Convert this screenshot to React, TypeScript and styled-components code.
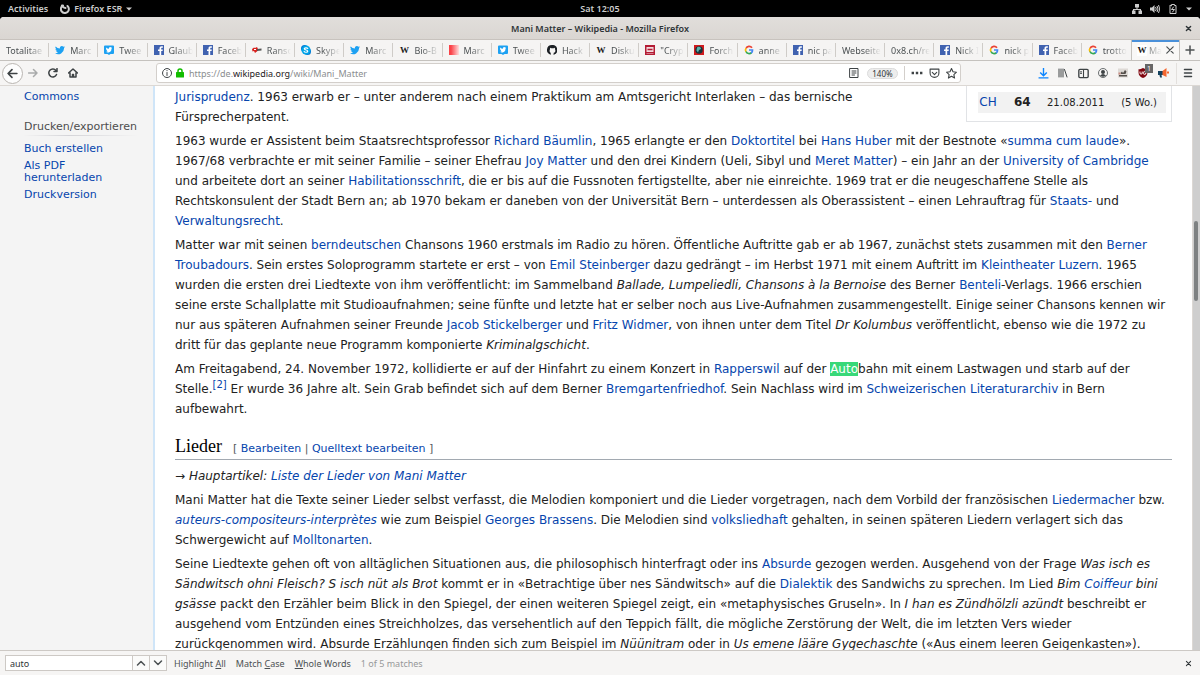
import React from "react";
import styled, { createGlobalStyle, css } from "styled-components";

const Global = createGlobalStyle`
  * { box-sizing: border-box; }
  html, body { margin: 0; height: 100%; }
  #root { height: 100%; }
  body { font-family: "DejaVu Sans", sans-serif; font-size: 12px; }
  button, input { font: inherit; color: inherit; }
  button { border: 0; padding: 0; background: none; }
  a { color: #0645ad; text-decoration: none; }
  a:hover { text-decoration: underline; }
`;

const uiFont = `"Noto Sans", "Open Sans", sans-serif`;

const Screen = styled.div`
  display: flex;
  flex-direction: column;
  height: 100vh;
  overflow: hidden;
  background: #000;
`;

const ShellBar = styled.header`
  display: grid;
  grid-template-columns: 1fr auto 1fr;
  align-items: center;
  flex: none;
  height: 17px;
  padding: 0 8px;
  background: #000;
  color: #ccc;
  font: 600 9px ${uiFont};
`;

const ShellGroup = styled.div<{ $end?: boolean }>`
  display: flex;
  align-items: center;
  justify-content: ${(p) => (p.$end ? "flex-end" : "flex-start")};
  gap: ${(p) => (p.$end ? "8px" : "12px")};
`;

const ShellButton = styled.button`
  display: flex;
  align-items: center;
  gap: 4px;
`;

const Browser = styled.div`
  display: flex;
  flex-direction: column;
  flex: 1;
  min-height: 0;
  border-radius: 4px 4px 0 0;
  overflow: hidden;
  background: #f6f5f4;
`;

const TitleBar = styled.div`
  display: grid;
  grid-template-columns: 1fr auto 1fr;
  align-items: center;
  flex: none;
  height: 23px;
  padding: 0 8px;
  background: linear-gradient(#e1dedb, #dad6d2);
  border-bottom: 1px solid #c8c3be;
  color: #2e3436;
  font: 600 9px ${uiFont};
`;

const TitleText = styled.span`
  grid-column: 2;
`;

const CloseButton = styled.button`
  display: flex;
  justify-self: end;
  color: #2e3436;
`;

const TabStrip = styled.div`
  display: flex;
  flex: none;
  height: 21px;
  border-bottom: 1px solid #c5c2be;
  background: #f5f4f3;
  font: 9px ${uiFont};
`;

const Tab = styled.button<{ $active?: boolean }>`
  display: flex;
  flex: 1 1 0;
  align-items: center;
  gap: 5px;
  min-width: 0;
  padding: 0 2px 0 6px;
  position: relative;
  color: #4c5153;
  svg { flex: none; }
  ${(p) =>
    p.$active
      ? css`
          flex: 0 0 49px;
          gap: 2px;
          padding: 0 5px;
          border: solid #c5c2be;
          border-width: 0 1px;
          background: #f9f8f7;
          box-shadow: inset 0 2px #4a90d9;
        `
      : css`
          &:not(:nth-last-child(3))::after {
            content: "";
            position: absolute;
            right: 0;
            top: 3px;
            bottom: 3px;
            width: 1px;
            background: #cfccc8;
          }
        `}
`;

const TabLabel = styled.span`
  flex: 1;
  min-width: 0;
  overflow: hidden;
  white-space: nowrap;
  text-align: left;
  mask-image: linear-gradient(to left, transparent 2px, #000 20px);
`;

const WikiMark = styled.span<{ $plate?: boolean }>`
  flex: none;
  width: 10px;
  background: ${(p) => (p.$plate ? "#fff" : "none")};
  color: #1b1b1b;
  text-align: center;
  font: 700 9px/11px "Liberation Serif", serif;
`;

const NewTab = styled.button`
  display: flex;
  align-items: center;
  justify-content: center;
  flex: none;
  width: 20px;
  color: #4c5153;
`;

const NavBar = styled.nav`
  display: flex;
  align-items: center;
  flex: none;
  height: 25px;
  border-bottom: 1px solid #dcd8d4;
  background: #f6f5f4;
  color: #3e4345;
`;

const NavButtons = styled.div`
  display: flex;
  align-items: center;
  width: 156px;
  padding-left: 2px;
`;

const IconButton = styled.button`
  display: flex;
  align-items: center;
  justify-content: center;
  width: 20px;
  height: 21px;
  &:disabled { color: #a9abab; }
`;

const BackButton = styled(IconButton)`
  width: 21px;
  border: 1px solid #b9b5b1;
  border-radius: 50%;
  background: #fdfdfd;
`;

const UrlBar = styled.div`
  display: flex;
  align-items: center;
  gap: 4px;
  flex: 1;
  height: 20px;
  margin-right: 72px;
  padding: 0 3px 0 5px;
  border: 1px solid #d3cfcb;
  border-radius: 3px;
  background: #fff;
`;

const Address = styled.div`
  flex: 1;
  margin-left: 1px;
  color: #8b8e8f;
  font: 9px ${uiFont};
  b { font-weight: 400; color: #1d2022; }
`;

const ZoomLevel = styled.button`
  width: 31px;
  height: 11px;
  margin: 0 2px 0 4px;
  border: 1px solid #dcdcdc;
  border-radius: 6px;
  background: #ededed;
  color: #2e3436;
  font: 8px/9px ${uiFont};
`;

const Divider = styled.span`
  width: 1px;
  height: 14px;
  margin-right: 2px;
  background: #d3cfcb;
`;

const UrlActions = styled.div`
  display: flex;
  align-items: center;
  gap: 6px;
`;

const Extensions = styled.div`
  display: flex;
  align-items: center;
`;

const Shield = styled.span`
  position: relative;
  display: flex;
`;

const Badge = styled.span`
  position: absolute;
  left: 7px;
  top: -4px;
  width: 8px;
  height: 9px;
  background: #666;
  color: #fff;
  text-align: center;
  font: 7px/9px ${uiFont};
`;

const MenuSlot = styled.div`
  display: flex;
  margin-left: 3px;
  padding: 0 2px 0 1px;
  border-left: 1px solid #e3e0dd;
`;

const Viewport = styled.div`
  display: flex;
  flex: 1;
  min-height: 0;
  overflow: hidden;
  background: #f4f4f4;
`;

const Sidebar = styled.aside`
  flex: none;
  width: 153px;
  padding: 5px 16px 0 24px;
  font-size: 11px;
  line-height: 12px;
`;

const SideHeading = styled.h3`
  margin: 17px 0 7px;
  padding-bottom: 2px;
  border-bottom: 1px solid;
  border-image: linear-gradient(to right, #f4f4f4, #d4d4d8 40%, #f4f4f4) 1;
  color: #4d4d4d;
  font-size: 11px;
  font-weight: 400;
  line-height: 13px;
`;

const SideList = styled.ul`
  display: flex;
  flex-direction: column;
  gap: 5px;
  margin: 0;
  padding: 0;
  list-style: none;
`;

const Article = styled.main`
  flex: 1;
  min-width: 0;
  padding: 1px 20px 0;
  border-left: 2px solid #cfe5f8;
  background: #fff;
  color: #222;
  line-height: 20px;
`;

const ChartBox = styled.div`
  float: right;
  width: 206px;
  margin: -1px 0 0 12px;
  padding: 6px 5px 8px 11px;
  border: 1px solid #e1e3e6;
  border-top: 0;
`;

const ChartTable = styled.table`
  width: 100%;
  border-spacing: 0;
  background: #f2f2f2;
  font-size: 10px;
  line-height: 21px;
  th, td { padding: 0; text-align: left; font-weight: 400; }
  th { width: 20px; font-size: 12px; text-align: center; }
  td:last-child { padding-right: 9px; text-align: right; }
`;

const ChartWeeks = styled.td`
  width: 49px;
  font-size: 12px;
  b { margin-left: 16px; font-weight: 700; }
`;

const Paragraph = styled.p`
  margin: 0 0 4px;
`;

const Hit = styled.mark`
  background: #38d878;
  color: #fff;
`;

const Cited = styled.span`
  white-space: nowrap;
`;

const Sup = styled.sup`
  font-size: 10px;
  line-height: 1;
`;

const SectionHeading = styled.h2`
  display: flex;
  align-items: baseline;
  gap: 11px;
  margin: 15px 0 6px;
  border-bottom: 1px solid #a2a9b1;
  color: #000;
  font: 400 18px/24px "Liberation Serif", serif;
`;

const EditLinks = styled.span`
  color: #54595d;
  font: 11px/20px "DejaVu Sans", sans-serif;
`;

const ScrollTrack = styled.div`
  flex: none;
  width: 8px;
  padding-top: 135px;
  border-left: 1px solid #dcd8d4;
  background: #cecece;
`;

const ScrollThumb = styled.div`
  width: 4px;
  height: 80px;
  margin-left: 1px;
  border-radius: 2px;
  background: #7e8182;
`;

const FindBar = styled.form`
  display: flex;
  align-items: center;
  flex: none;
  height: 25px;
  padding: 0 8px 0 5px;
  border-top: 1px solid #cdc9c5;
  background: #f6f5f4;
  color: #4c5153;
  font: 9px ${uiFont};
`;

const FindInput = styled.input`
  width: 128px;
  height: 16px;
  padding: 0 4px;
  border: 1px solid #cdc9c5;
  background: #fff;
  color: #2e3436;
`;

const FindStep = styled.button`
  display: flex;
  align-items: center;
  justify-content: center;
  width: 17px;
  height: 16px;
  border: 1px solid #cdc9c5;
  border-left: 0;
  background: #fbfbfa;
`;

const FindOptions = styled.div`
  display: flex;
  flex: 1;
  gap: 10px;
  margin-left: 7px;
`;

const Matches = styled.span`
  color: #969899;
`;

type IconName =
  | "none" | "twitter" | "tweet" | "facebook" | "knife" | "skype" | "wiki"
  | "red" | "github" | "cryp" | "forch" | "google";

const bird =
  "M20 4a8 8 0 0 1-2.400.600A4 4 0 0 0 19.400 2.300a8 8 0 0 1-2.600 1A4.100 4.100 0 0 0 9.800 7 11.600 11.600 0 0 1 1.400 2.800a4.100 4.100 0 0 0 1.300 5.500A4 4 0 0 1 .8 7.800a4.100 4.100 0 0 0 3.300 4 4 4 0 0 1-1.800.1 4.100 4.100 0 0 0 3.800 2.800A8.200 8.200 0 0 1 0 16.400a11.600 11.600 0 0 0 18-10.300A8 8 0 0 0 20 4z";

const iconArt: Partial<Record<IconName, React.ReactNode>> = {
  twitter: <path fill="#1da1f2" d={bird} />,
  tweet: (
    <>
      <path fill="#1da1f2" d="M2 1h16a2 2 0 0 1 2 2v13a2 2 0 0 1-2 2h-5l-3 2-3-2H2a2 2 0 0 1-2-2V3a2 2 0 0 1 2-2z" />
      <path fill="#fff" transform="translate(3.500 3) scale(.65)" d={bird} />
    </>
  ),
  facebook: (
    <>
      <path fill="#4062b0" d="M0 0h20v20H0z" />
      <path fill="#fff" d="M11 20v-8H8V9h3V7c0-3 1.500-4.500 4.300-4.500h2.400v3h-1.600c-1.400 0-1.700.6-1.700 1.700V9h3.200l-.4 3h-2.800v8z" />
    </>
  ),
  knife: (
    <>
      <path fill="#d8221f" d="M0 8l4-3 2 1 4-2 2 4-1 4-5 4-2-4-3 1z" />
      <path fill="#555" d="M10 8l9-1v4l-9 1z" />
      <path fill="#fff" d="M4 8h4v2H4z" />
    </>
  ),
  skype: (
    <>
      <circle cx="7" cy="7" r="7" fill="#0078d4" />
      <circle cx="13" cy="13" r="7" fill="#0078d4" />
      <circle cx="10" cy="10" r="9" fill="#00a4e8" />
      <path fill="none" stroke="#fff" strokeWidth="2.400" strokeLinecap="round" d="M13.500 7c-1-2-7-2-7 .7 0 3 7 1.500 7 4.600 0 3-6.500 2.700-7.200.3" />
    </>
  ),
  red: (
    <>
      <defs>
        <linearGradient id="redFade">
          <stop offset=".2" stopColor="#fa4248" />
          <stop offset="1" stopColor="#fdd" />
        </linearGradient>
      </defs>
      <path fill="url(#redFade)" d="M0 0h20v20H0z" />
    </>
  ),
  github: (
    <path
      fill="#1b1f23"
      d="M10 0a10 10 0 0 0-3.200 19.500c.5.1.7-.2.7-.5v-3.400c-1.700-.5-2.300-2-2.300-4.500 0-1.200.4-2 1-2.800-.2-.7-.2-1.600.1-2.700 1 0 1.900.5 2.700 1.100h4c.8-.6 1.700-1.100 2.700-1.100.3 1 .3 2 .1 2.700.6.800 1 1.600 1 2.800 0 2.500-.6 4-3.300 4.500l-.5 3.400c0 .3.200.6.700.5A10 10 0 0 0 10 0z"
    />
  ),
  cryp: (
    <>
      <path fill="#b31b34" d="M0 0h20v20H0z" />
      <path fill="#f3dadd" d="M3 4h14v10H3zM3 16h14v1H3z" />
      <path stroke="#b31b34" strokeWidth="3" d="M5 9h10" />
    </>
  ),
  forch: (
    <>
      <path fill="#d01a1d" d="M0 0h20v20H0z" />
      <circle cx="10" cy="10" r="7.500" fill="#17343a" />
      <path fill="#58b5ae" d="M6 5c3-3 8-1 8 3l-4 2-2 5-3-4z" />
    </>
  ),
  google: (
    <g fill="none" strokeWidth="3.400">
      <path stroke="#ea4335" d="M16 5.500A7 7 0 0 0 4 7" />
      <path stroke="#fbbc05" d="M4 6.500a7 7 0 0 0 0 7" />
      <path stroke="#34a853" d="M4 13a7 7 0 0 0 11 2.500" />
      <path stroke="#4285f4" d="M10 10h7a7 7 0 0 1-2.500 6" />
    </g>
  ),
};

const Favicon = ({ name }: { name: IconName }) => {
  if (name === "none") return null;
  if (name === "wiki") return <WikiMark>W</WikiMark>;
  return (
    <svg width="10" height="10" viewBox="0 0 20 20" aria-hidden="true">
      {iconArt[name]}
    </svg>
  );
};

const tabs: { icon: IconName; label: string }[] = [
  { icon: "none", label: "Totalitae" },
  { icon: "twitter", label: "Marc" },
  { icon: "tweet", label: "Twee" },
  { icon: "facebook", label: "Glaub" },
  { icon: "facebook", label: "Faceb" },
  { icon: "knife", label: "Ranso" },
  { icon: "skype", label: "Skype" },
  { icon: "twitter", label: "Marc" },
  { icon: "wiki", label: "Bio-B" },
  { icon: "red", label: "Marc" },
  { icon: "tweet", label: "Twee" },
  { icon: "github", label: "Hack" },
  { icon: "wiki", label: "Disku" },
  { icon: "cryp", label: "\"Cryp" },
  { icon: "forch", label: "Forch" },
  { icon: "google", label: "anne" },
  { icon: "facebook", label: "nic pa" },
  { icon: "none", label: "Webseite" },
  { icon: "none", label: "0x8.ch/re" },
  { icon: "facebook", label: "Nick I" },
  { icon: "google", label: "nick p" },
  { icon: "facebook", label: "Faceb" },
  { icon: "google", label: "trotto" },
];

type GlyphProps = { d: string; size?: number; fill?: boolean; width?: number };

const Glyph = ({ d, size = 10, fill, width = 2 }: GlyphProps) => (
  <svg
    width={size}
    height={size}
    viewBox="0 0 20 20"
    fill={fill ? "currentColor" : "none"}
    stroke={fill ? "none" : "currentColor"}
    strokeWidth={width}
    strokeLinecap="round"
    strokeLinejoin="round"
    aria-hidden="true"
  >
    <path d={d} />
  </svg>
);

const cross = "M4 4l12 12M16 4L4 16";
const caret = "M0 5h20L10 15z";
const L = ({ children }: { children: React.ReactNode }) => <a href="#">{children}</a>;

export default function App() {
  return (
    <Screen>
      <Global />
      <ShellBar>
        <ShellGroup>
          <ShellButton>Activities</ShellButton>
          <ShellButton>
            <Glyph width={4} d="M6 3a8 8 0 1 0 9 1M4 3c2 2 3 5 7 5" />
            Firefox ESR
            <Glyph size={6} fill d={caret} />
          </ShellButton>
        </ShellGroup>
        <span>Sat 12:05</span>
        <ShellGroup $end>
          <Glyph fill d="M6 0h8v7h-3v3h7v3h2v7h-7v-7h3v-1H4v1h3v7H0v-7h2v-3h7V7H6z" />
          <svg width="10" height="10" viewBox="0 0 20 20" fill="none" stroke="currentColor" strokeWidth="2" aria-hidden="true">
            <path fill="currentColor" stroke="none" d="M0 7h4l5-5v16l-5-5H0z" />
            <path d="M11 6q3 4 0 8M14 4q4 6 0 12M17 2q5 8 0 16" />
          </svg>
          <Glyph width={2} d="M7 3V1h6v2h3v16H4V3zM11 6l-4 5h6l-4 5" />
          <Glyph size={6} fill d={caret} />
        </ShellGroup>
      </ShellBar>
      <Browser>
        <TitleBar>
          <TitleText>Mani Matter – Wikipedia - Mozilla Firefox</TitleText>
          <CloseButton aria-label="Close window"><Glyph size={7} width={4} d={cross} /></CloseButton>
        </TitleBar>
        <TabStrip>
          {tabs.map((t, i) => (
            <Tab key={i}>
              <Favicon name={t.icon} />
              <TabLabel>{t.label}</TabLabel>
            </Tab>
          ))}
          <Tab $active>
            <WikiMark $plate>W</WikiMark>
            <TabLabel>Ma</TabLabel>
            <Glyph size={8} width={3} d="M2 2l16 16M18 2L2 18" />
          </Tab>
          <NewTab aria-label="New tab"><Glyph width={3} d="M10 2v16M2 10h16" /></NewTab>
        </TabStrip>
        <NavBar>
          <NavButtons>
            <BackButton aria-label="Back"><Glyph size={11} width={3} d="M18 10H2M9 3l-7 7 7 7" /></BackButton>
            <IconButton aria-label="Forward" disabled><Glyph width={3} d="M1 10h17M11 3l7 7-7 7" /></IconButton>
            <IconButton aria-label="Reload"><Glyph width={3} d="M17 13a8 8 0 1 1-1-8M18 1v6h-6" /></IconButton>
            <IconButton aria-label="Home"><Glyph width={3} d="M1 10l9-8 9 8M4 9v9h12V9M9 18v-5h2v5" /></IconButton>
          </NavButtons>
          <UrlBar>
            <Glyph width={2} d="M10 1a9 9 0 1 0 .1 0M10 9v6M10 5v.5" />
            <svg width="8" height="10" viewBox="0 0 16 20" aria-hidden="true">
              <path fill="none" stroke="#12bc00" strokeWidth="3" d="M4 10V6a4 4 0 0 1 8 0v4" />
              <rect y="8" width="16" height="11" rx="1" fill="#12bc00" />
            </svg>
            <Address>https://de.<b>wikipedia.org</b>/wiki/Mani_Matter</Address>
            <Glyph width={2} d="M2 1h16v18H2zM6 6h8M6 10h8M6 14h5" />
            <ZoomLevel>140%</ZoomLevel>
            <Divider />
            <UrlActions>
              <Glyph fill size={12} d="M1 8h4v4H1zM8 8h4v4H8zM15 8h4v4h-4z" />
              <Glyph width={2} size={11} d="M2 2h16v7a8 8 0 0 1-16 0zM6 8l4 4 4-4" />
              <Glyph width={2} size={11} d="M10 1l2.700 5.900 6.300.7-4.700 4.300 1.300 6.400L10 15l-5.600 3.300 1.300-6.400L1 7.600l6.300-.7z" />
            </UrlActions>
          </UrlBar>
          <Extensions>
            <IconButton aria-label="Downloads">
              <svg width="11" height="11" viewBox="0 0 20 20" fill="none" stroke="#0a84ff" strokeWidth="2.500" aria-hidden="true">
                <path d="M10 0v14M4 8l6 6 6-6M1 18h18" />
              </svg>
            </IconButton>
            <IconButton aria-label="Library"><Glyph width={2} d="M2 2v16M6 2v16M10 2v16M13 3l5 15" /></IconButton>
            <IconButton aria-label="Sidebars">
              <svg width="11" height="11" viewBox="0 0 20 20" fill="none" stroke="currentColor" strokeWidth="2.500" aria-hidden="true">
                <rect x="1.500" y="2.500" width="17" height="15" rx="2" />
                <path d="M10 2v16M4 7h3M4 10h3" strokeWidth="2" />
              </svg>
            </IconButton>
            <IconButton aria-label="Account">
              <svg width="10" height="10" viewBox="0 0 20 20" aria-hidden="true">
                <circle cx="10" cy="10" r="9" fill="none" stroke="currentColor" strokeWidth="1.500" />
                <circle cx="10" cy="8" r="4" fill="currentColor" />
                <path fill="currentColor" d="M4 15q6-6 12 0-6 5-12 0z" />
              </svg>
            </IconButton>
            <IconButton aria-label="Page archive">
              <svg width="10" height="10" viewBox="0 0 20 20" aria-hidden="true">
                <path fill="#dedad6" d="M0 1h20v18H0z" />
                <path fill="#55504c" d="M2 14h16v3H2zM5 10l3-3 2 3 4-6 3 3-2 5H6z" />
                <path fill="#c98d84" d="M1 9h4v4H1z" />
              </svg>
            </IconButton>
            <IconButton aria-label="Content blocker">
              <Shield>
                <svg width="10" height="10" viewBox="0 0 20 20" aria-hidden="true">
                  <path fill="#800610" d="M10 0c3 2 6 2.500 9 2.500V9c0 6-4 9-9 11C5 18 1 15 1 9V2.500C4 2.500 7 2 10 0z" />
                  <path fill="none" stroke="#fff" strokeWidth="1.800" d="M4 7v3a2.200 2.200 0 0 0 4.400 0V7M15.500 8a3 3 0 1 0 0 4v-2H13" />
                </svg>
                <Badge>1</Badge>
              </Shield>
            </IconButton>
            <IconButton aria-label="Announcements">
              <svg width="11" height="10" viewBox="0 0 22 20" aria-hidden="true">
                <path fill="#14425f" d="M0 6h10v8H7l1 5H4l-1-5H0z" />
                <path fill="#f4662f" d="M9 6l8-6v18l-8-4zM18 7h4v4h-4z" />
              </svg>
            </IconButton>
          </Extensions>
          <MenuSlot>
            <IconButton aria-label="Menu"><Glyph width={3} d="M3 3h14M3 10h14M3 17h14" /></IconButton>
          </MenuSlot>
        </NavBar>
        <Viewport>
          <Sidebar>
            <L>Commons</L>
            <SideHeading>Drucken/exportieren</SideHeading>
            <SideList>
              <li><L>Buch erstellen</L></li>
              <li><L>Als PDF herunterladen</L></li>
              <li><L>Druckversion</L></li>
            </SideList>
          </Sidebar>
          <Article>
            <ChartBox>
              <ChartTable>
                <tbody>
                  <tr>
                    <th scope="row"><L>CH</L></th>
                    <ChartWeeks><b>64</b></ChartWeeks>
                    <td>21.08.2011</td>
                    <td>(5 Wo.)</td>
                  </tr>
                </tbody>
              </ChartTable>
            </ChartBox>
            <Paragraph>
              <L>Jurisprudenz</L>. 1963 erwarb er – unter anderem nach einem Praktikum am Amtsgericht
              Interlaken – das bernische Fürsprecherpatent.
            </Paragraph>
            <Paragraph>
              1963 wurde er Assistent beim Staatsrechtsprofessor <L>Richard Bäumlin</L>, 1965 erlangte er
              den <L>Doktortitel</L> bei <L>Hans Huber</L> mit der Bestnote «<L>summa cum laude</L>».
              1967/68 verbrachte er mit seiner Familie – seiner Ehefrau <L>Joy Matter</L> und den drei
              Kindern (Ueli, Sibyl und <L>Meret Matter</L>) – ein Jahr an der <L>University of
              Cambridge</L> und arbeitete dort an seiner <L>Habilitationsschrift</L>, die er bis auf die
              Fussnoten fertigstellte, aber nie einreichte. 1969 trat er die neugeschaffene Stelle als
              Rechtskonsulent der Stadt Bern an; ab 1970 bekam er daneben von der Universität Bern –
              unterdessen als Oberassistent – einen Lehrauftrag für <L>Staats-</L> und{" "}
              <L>Verwaltungsrecht</L>.
            </Paragraph>
            <Paragraph>
              Matter war mit seinen <L>berndeutschen</L> Chansons 1960 erstmals im Radio zu hören.
              Öffentliche Auftritte gab er ab 1967, zunächst stets zusammen mit den <L>Berner
              Troubadours</L>. Sein erstes Soloprogramm startete er erst – von <L>Emil Steinberger</L>{" "}
              dazu gedrängt – im Herbst 1971 mit einem Auftritt im <L>Kleintheater Luzern</L>. 1965
              wurden die ersten drei Liedtexte von ihm veröffentlicht: im Sammelband <i>Ballade,
              Lumpeliedli, Chansons à la Bernoise</i> des Berner <L>Benteli</L>-Verlags. 1966 erschien
              seine erste Schallplatte mit Studioaufnahmen; seine fünfte und letzte hat er selber noch
              aus Live-Aufnahmen zusammengestellt. Einige seiner Chansons kennen wir nur aus späteren
              Aufnahmen seiner Freunde <L>Jacob Stickelberger</L> und <L>Fritz Widmer</L>, von ihnen
              unter dem Titel <i>Dr Kolumbus</i> veröffentlicht, ebenso wie die 1972 zu dritt für das
              geplante neue Programm komponierte <i>Kriminalgschicht</i>.
            </Paragraph>
            <Paragraph>
              Am Freitagabend, 24. November 1972, kollidierte er auf der Hinfahrt zu einem Konzert
              in <L>Rapperswil</L> auf der <Hit>Auto</Hit>bahn mit einem Lastwagen und starb auf
              der <Cited>Stelle.<Sup><L>[2]</L></Sup></Cited> Er wurde 36 Jahre alt. Sein Grab befindet
              sich auf dem Berner <L>Bremgartenfriedhof</L>. Sein Nachlass wird im <L>Schweizerischen
              Literaturarchiv</L> in Bern aufbewahrt.
            </Paragraph>
            <SectionHeading>
              Lieder
              <EditLinks>[ <L>Bearbeiten</L> | <L>Quelltext bearbeiten</L> ]</EditLinks>
            </SectionHeading>
            <Paragraph>
              → <i>Hauptartikel: <L>Liste der Lieder von Mani Matter</L></i>
            </Paragraph>
            <Paragraph>
              Mani Matter hat die Texte seiner Lieder selbst verfasst, die Melodien komponiert und die
              Lieder vorgetragen, nach dem Vorbild der französischen <L>Liedermacher</L> bzw.{" "}
              <i><L>auteurs-compositeurs-interprètes</L></i> wie zum Beispiel <L>Georges Brassens</L>.
              Die Melodien sind <L>volksliedhaft</L> gehalten, in seinen späteren Liedern verlagert sich
              das Schwergewicht auf <L>Molltonarten</L>.
            </Paragraph>
            <Paragraph>
              Seine Liedtexte gehen oft von alltäglichen Situationen aus, die philosophisch hinterfragt
              oder ins <L>Absurde</L> gezogen werden. Ausgehend von der Frage <i>Was isch es Sändwitsch
              ohni Fleisch? S isch nüt als Brot</i> kommt er in «Betrachtige über nes Sändwitsch» auf
              die <L>Dialektik</L> des Sandwichs zu sprechen. Im Lied <i>Bim <L>Coiffeur</L> bini
              gsässe</i> packt den Erzähler beim Blick in den Spiegel, der einen weiteren Spiegel zeigt,
              ein «metaphysisches Gruseln». In <i>I han es Zündhölzli azündt</i> beschreibt er ausgehend
              vom Entzünden eines Streichholzes, das versehentlich auf den Teppich fällt, die mögliche
              Zerstörung der Welt, die im letzten Vers wieder zurückgenommen wird. Absurde Erzählungen
              finden sich zum Beispiel im <i>Nüünitram</i> oder in <i>Us emene lääre
              Gygechaschte</i> («Aus einem leeren Geigenkasten»).
            </Paragraph>
          </Article>
          <ScrollTrack><ScrollThumb /></ScrollTrack>
        </Viewport>
        <FindBar>
          <FindInput aria-label="Find in page" defaultValue="auto" />
          <FindStep type="button" aria-label="Previous match"><Glyph width={3} d="M3 14l7-7 7 7" /></FindStep>
          <FindStep type="button" aria-label="Next match"><Glyph width={3} d="M3 6l7 7 7-7" /></FindStep>
          <FindOptions>
            <button type="button">Highlight <u>A</u>ll</button>
            <button type="button">Match <u>C</u>ase</button>
            <button type="button"><u>W</u>hole Words</button>
            <Matches>1 of 5 matches</Matches>
          </FindOptions>
          <CloseButton type="button" aria-label="Close find bar"><Glyph size={7} width={3} d={cross} /></CloseButton>
        </FindBar>
      </Browser>
    </Screen>
  );
}
